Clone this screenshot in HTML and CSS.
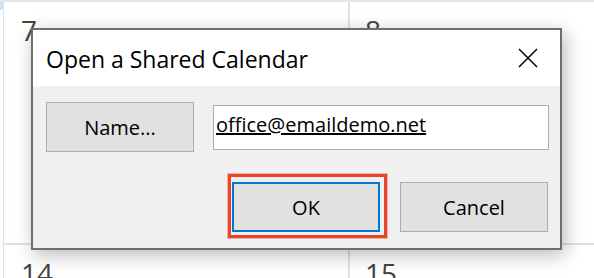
FILE: index.html
```html
<!DOCTYPE html>
<html lang="en">
<head>
  <meta charset="UTF-8" />
  <meta name="viewport" content="width=device-width, initial-scale=1.0"/>
  <title>Open a Shared Calendar</title>
  <link rel="stylesheet" href="styles.css">
</head>
<body>

  <div class="calendar">
    <div class="strip"><div class="strip-mark"></div></div>
    <div class="grid">
      <div class="cell"><span class="day">7</span></div>
      <div class="cell cell-right"><span class="day">8</span></div>
      <div class="cell cell-bottom"><span class="day">14</span></div>
      <div class="cell cell-right cell-bottom"><span class="day">15</span></div>
    </div>
  </div>

  <div class="dialog">
    <div class="title-bar">
      <span class="title">Open a Shared Calendar</span>
      <button class="close" aria-label="Close">
        <svg width="20" height="20" viewBox="0 0 20 20">
          <path d="M1 1 L19 19 M19 1 L1 19" stroke="#000" stroke-width="1.5" fill="none"/>
        </svg>
      </button>
    </div>
    <div class="dialog-body">
      <div class="name-row">
        <button class="btn">Name...</button>
        <div class="field"><span class="field-text">office@emaildemo.net</span></div>
      </div>
      <div class="actions">
        <div class="ok-wrap">
          <button class="btn btn-default">OK</button>
          <div class="highlight"></div>
        </div>
        <button class="btn">Cancel</button>
      </div>
    </div>
  </div>

</body>
</html>
```

FILE: styles.css
```css
body {
  margin: 0;
  width: 594px;
  height: 278px;
  overflow: hidden;
  background-color: #fff;
  font-family: "Open Sans", "Noto Sans", sans-serif;
  color: #000;
  position: relative;
}

.calendar {
  display: flex;
  height: 278px;
  overflow: hidden;
  border-top: 2px solid #e6e6e6;
  box-sizing: border-box;
}

.strip {
  width: 3px;
}

.strip-mark {
  height: 8px;
  background-color: #cce4f7;
}

.grid {
  flex: 1;
  display: grid;
  grid-template-columns: 345px 1fr;
  grid-template-rows: 241px 35px;
}

.cell {
  border-left: 1px solid #e1e1e1;
  padding: 14px 0 0 17px;
  overflow: hidden;
}

.cell-right {
  border-left: 2px solid #e1e1e1;
  padding-left: 15px;
}

.cell-bottom {
  border-top: 2px solid #e1e1e1;
  padding-top: 14px;
}

.day {
  font-size: 28px;
  color: #444;
  line-height: 1;
}

.dialog {
  position: absolute;
  left: 31px;
  top: 28px;
  width: 531px;
  height: 222px;
  box-sizing: border-box;
  border: 2px solid #6e6e6e;
  background-color: #f0f0f0;
  box-shadow: 3px 5px 18px rgba(0, 0, 0, 0.28);
  display: flex;
  flex-direction: column;
}

.title-bar {
  height: 56px;
  background-color: #fff;
  display: flex;
  align-items: center;
  justify-content: space-between;
  padding: 0 22px 0 13px;
}

.title {
  font-size: 23px;
  margin-top: 1px;
}

.close {
  border: none;
  background: none;
  padding: 0;
  width: 20px;
  height: 20px;
}

.close svg {
  display: block;
}

.dialog-body {
  padding: 16px 11px 0 13px;
}

.name-row {
  display: flex;
  gap: 19px;
  align-items: flex-start;
}

.btn {
  width: 148px;
  height: 50px;
  background-color: #e1e1e1;
  border: 1px solid #adadad;
  font-family: "Open Sans", "Noto Sans", sans-serif;
  font-size: 20px;
  color: #000;
  padding: 0;
}

.field {
  flex: 1;
  height: 45px;
  margin-top: 3px;
  box-sizing: border-box;
  background-color: #fff;
  border: 1px solid #acacac;
  padding: 5px 0 0 2px;
}

.field-text {
  font-size: 20px;
  text-decoration: underline;
}

.actions {
  display: flex;
  justify-content: flex-end;
  gap: 20px;
  margin-top: 30px;
  padding-right: 1px;
}

.ok-wrap {
  position: relative;
}

.btn-default {
  border: 2px solid #0078d7;
  display: block;
}

.highlight {
  position: absolute;
  left: -4px;
  top: -8px;
  right: -7px;
  bottom: -6px;
  border: 3px solid #e8442a;
  box-shadow: 0 0 0 1px rgba(232, 68, 42, 0.35);
}
```
